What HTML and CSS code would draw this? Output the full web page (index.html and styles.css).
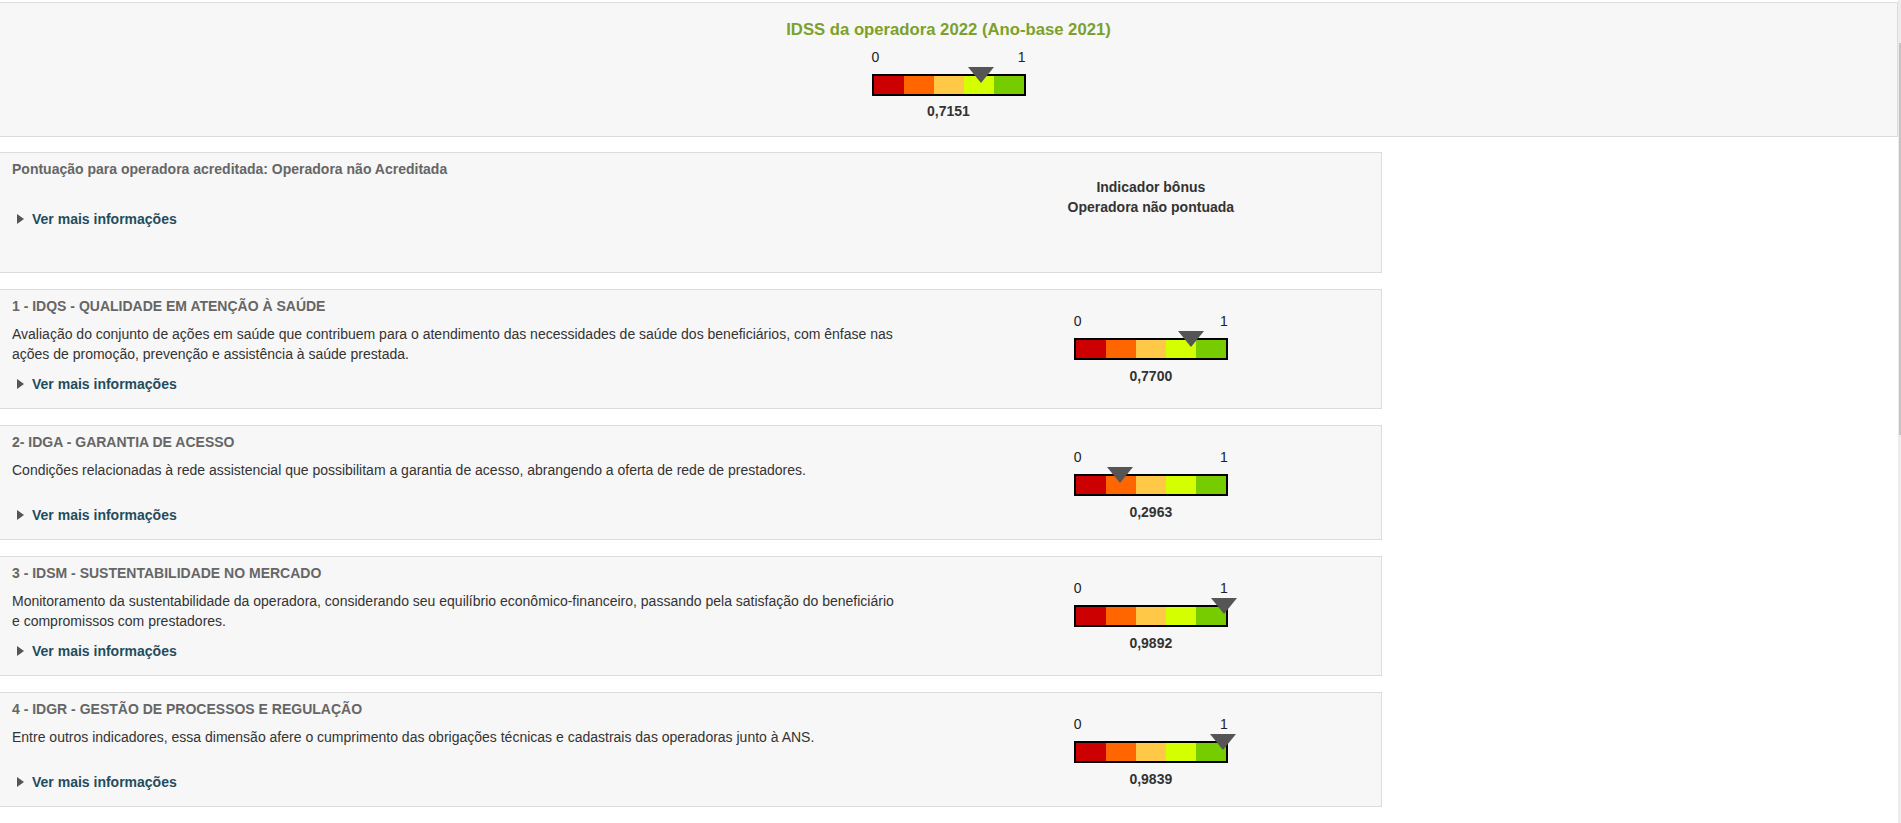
FILE: index.html
```html
<!DOCTYPE html>
<html lang="pt-BR">
<head>
<meta charset="utf-8">
<title>IDSS da operadora</title>
<link rel="stylesheet" href="styles.css">
</head>
<body>
<div class="page">
  <section class="summary">
    <h2 class="summary-title">IDSS da operadora 2022 (Ano-base 2021)</h2>
    <div class="gauge gauge-summary">
      <div class="gauge-labels"><span>0</span><span>1</span></div>
      <div class="gauge-bar">
        <span class="seg seg-1"></span><span class="seg seg-2"></span><span class="seg seg-3"></span><span class="seg seg-4"></span><span class="seg seg-5"></span>
        <span class="gauge-pointer" style="left: 71.51%"></span>
      </div>
      <div class="gauge-value">0,7151</div>
    </div>
  </section>

  <div class="cards">
    <article class="card card-bonus">
      <div class="card-main">
        <h3 class="card-title">Pontuação para operadora acreditada: Operadora não Acreditada</h3>
        <a class="more"><span class="more-icon"></span>Ver mais informações</a>
      </div>
      <div class="card-side">
        <div class="bonus">Indicador bônus<br>Operadora não pontuada</div>
      </div>
    </article>

    <article class="card">
      <div class="card-main">
        <h3 class="card-title">1 - IDQS - QUALIDADE EM ATENÇÃO À SAÚDE</h3>
        <p class="card-text">Avaliação do conjunto de ações em saúde que contribuem para o atendimento das necessidades de saúde dos beneficiários, com ênfase nas ações de promoção, prevenção e assistência à saúde prestada.</p>
        <a class="more"><span class="more-icon"></span>Ver mais informações</a>
      </div>
      <div class="card-side">
        <div class="gauge">
          <div class="gauge-labels"><span>0</span><span>1</span></div>
          <div class="gauge-bar">
            <span class="seg seg-1"></span><span class="seg seg-2"></span><span class="seg seg-3"></span><span class="seg seg-4"></span><span class="seg seg-5"></span>
            <span class="gauge-pointer" style="left: 77%"></span>
          </div>
          <div class="gauge-value">0,7700</div>
        </div>
      </div>
    </article>

    <article class="card">
      <div class="card-main">
        <h3 class="card-title">2- IDGA - GARANTIA DE ACESSO</h3>
        <p class="card-text">Condições relacionadas à rede assistencial que possibilitam a garantia de acesso, abrangendo a oferta de rede de prestadores.</p>
        <a class="more"><span class="more-icon"></span>Ver mais informações</a>
      </div>
      <div class="card-side">
        <div class="gauge">
          <div class="gauge-labels"><span>0</span><span>1</span></div>
          <div class="gauge-bar">
            <span class="seg seg-1"></span><span class="seg seg-2"></span><span class="seg seg-3"></span><span class="seg seg-4"></span><span class="seg seg-5"></span>
            <span class="gauge-pointer" style="left: 29.63%"></span>
          </div>
          <div class="gauge-value">0,2963</div>
        </div>
      </div>
    </article>

    <article class="card">
      <div class="card-main">
        <h3 class="card-title">3 - IDSM - SUSTENTABILIDADE NO MERCADO</h3>
        <p class="card-text">Monitoramento da sustentabilidade da operadora, considerando seu equilíbrio econômico-financeiro, passando pela satisfação do beneficiário e compromissos com prestadores.</p>
        <a class="more"><span class="more-icon"></span>Ver mais informações</a>
      </div>
      <div class="card-side">
        <div class="gauge">
          <div class="gauge-labels"><span>0</span><span>1</span></div>
          <div class="gauge-bar">
            <span class="seg seg-1"></span><span class="seg seg-2"></span><span class="seg seg-3"></span><span class="seg seg-4"></span><span class="seg seg-5"></span>
            <span class="gauge-pointer" style="left: 98.92%"></span>
          </div>
          <div class="gauge-value">0,9892</div>
        </div>
      </div>
    </article>

    <article class="card">
      <div class="card-main">
        <h3 class="card-title">4 - IDGR - GESTÃO DE PROCESSOS E REGULAÇÃO</h3>
        <p class="card-text">Entre outros indicadores, essa dimensão afere o cumprimento das obrigações técnicas e cadastrais das operadoras junto à ANS.</p>
        <a class="more"><span class="more-icon"></span>Ver mais informações</a>
      </div>
      <div class="card-side">
        <div class="gauge">
          <div class="gauge-labels"><span>0</span><span>1</span></div>
          <div class="gauge-bar">
            <span class="seg seg-1"></span><span class="seg seg-2"></span><span class="seg seg-3"></span><span class="seg seg-4"></span><span class="seg seg-5"></span>
            <span class="gauge-pointer" style="left: 98.39%"></span>
          </div>
          <div class="gauge-value">0,9839</div>
        </div>
      </div>
    </article>
  </div>
</div>
<div class="scrollbar"><div class="scrollbar-thumb"></div></div>
</body>
</html>
```

FILE: styles.css
```css
* { box-sizing: border-box; }

html, body {
  margin: 0;
  padding: 0;
  background: #fff;
  overflow: hidden;
}

body {
  font-family: "Liberation Sans", Arial, Helvetica, sans-serif;
  font-size: 14px;
  line-height: 20px;
  color: #333;
}

.page {
  width: 1899px;
  margin-left: -1px;
  padding-top: 2px;
}

/* ---------- summary header ---------- */
.summary {
  background: #f7f7f7;
  border: 1px solid #dcdcdc;
  padding: 17px 0 15px;
  margin-bottom: 15px;
  text-align: center;
}

.summary-title {
  margin: 0;
  font-size: 16.7px;
  line-height: 20px;
  font-weight: bold;
  color: #7ba12c;
}

/* ---------- gauge ---------- */
.gauge {
  width: 154px;
  margin: 0 auto;
}

.gauge-summary {
  margin-top: 7px;
}

.gauge-labels {
  display: flex;
  justify-content: space-between;
  line-height: 20px;
  color: #222;
}

.gauge-bar {
  position: relative;
  display: flex;
  height: 22px;
  margin-top: 7px;
  border: 2px solid #000;
}

.seg { flex: 1 1 0; }
.seg-1 { background: #cc0000; }
.seg-2 { background: #ff6600; }
.seg-3 { background: #ffc846; }
.seg-4 { background: #d4ff00; }
.seg-5 { background: #77cc00; }

.gauge-pointer {
  position: absolute;
  top: -9px;
  width: 0;
  height: 0;
  margin-left: -13px;
  border-left: 13px solid transparent;
  border-right: 13px solid transparent;
  border-top: 16px solid #555;
}

.gauge-value {
  margin-top: 6px;
  font-weight: bold;
  text-align: center;
  color: #333;
}

.gauge-summary .gauge-value {
  margin-top: 5px;
}

/* ---------- cards ---------- */
.cards {
  width: 1383px;
  display: flex;
  flex-direction: column;
  gap: 16px;
}

.card {
  display: grid;
  grid-template-columns: 2fr 1fr;
  background: #f7f7f7;
  border: 1px solid #dcdcdc;
  padding: 6px 0 14px;
}

.card-main {
  display: flex;
  flex-direction: column;
  align-items: flex-start;
  padding: 0 20px 0 12px;
  min-width: 0;
}

.card-title {
  margin: 0;
  font-size: 14px;
  line-height: 20px;
  font-weight: bold;
  color: #666;
}

.card-text {
  margin: 8px 0 10px;
  color: #333;
}

.more {
  display: inline-flex;
  align-items: center;
  margin-top: auto;
  padding-left: 5px;
  font-weight: bold;
  color: #1f4d5e;
  text-decoration: none;
  cursor: pointer;
}

.more-icon {
  width: 0;
  height: 0;
  margin-right: 8px;
  border-left: 7px solid #555;
  border-top: 5px solid transparent;
  border-bottom: 5px solid transparent;
}

.card-side {
  padding-top: 15px;
  padding-bottom: 3px;
  text-align: center;
}

/* bonus card */
.card-bonus {
  min-height: 121px;
}

.card-bonus .more {
  margin-top: 30px;
}

.card-bonus .card-side {
  padding-top: 18px;
}

.bonus {
  font-weight: bold;
  color: #333;
}

/* ---------- overlay scrollbar ---------- */
.scrollbar {
  position: fixed;
  top: 0;
  right: 0;
  width: 3px;
  height: 100%;
  background: #ececec;
}

.scrollbar-thumb {
  position: absolute;
  top: 43px;
  right: 0;
  width: 2px;
  height: 392px;
  background: #c4c4c4;
}
```
